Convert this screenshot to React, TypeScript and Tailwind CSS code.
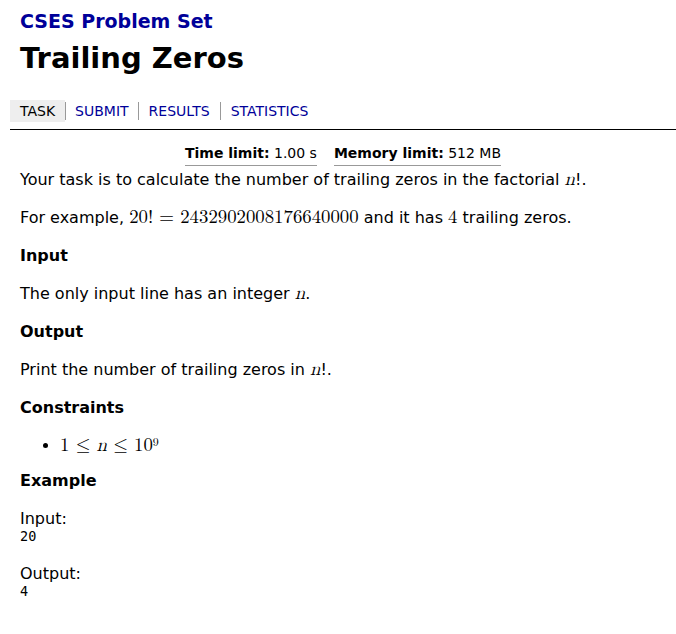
export default function App() {
  const m = "font-['Latin_Modern_Math','DejaVu_Serif',serif] text-[18.8px] leading-none";
  return (
    <div className="min-h-[634px] bg-white text-black font-['DejaVu_Sans',sans-serif] text-[16px]">
      <div className="pl-[10px]">
        <div className="px-[10px] pt-[9px]">
          <div className="text-[19px] font-bold text-[#000099] leading-[24px]">CSES Problem Set</div>
          <h1 className="text-[29px] font-bold leading-[36px] mt-[7px]">Trailing Zeros</h1>
        </div>
        <div className="mt-[24px] flex items-center text-[14px] leading-[22px]">
          <span className="bg-[#eeeeee] px-[10px] py-0 h-[22px]">TASK</span>
          <span className="w-px h-[18px] bg-[#999]" />
          <span className="px-[9px] text-[#000099]">SUBMIT</span>
          <span className="w-px h-[18px] bg-[#999]" />
          <span className="px-[10px] text-[#000099]">RESULTS</span>
          <span className="w-px h-[18px] bg-[#999]" />
          <span className="px-[10px] text-[#000099]">STATISTICS</span>
        </div>
        <div className="mt-[7px] border-t border-black" />
        <div className="px-[10px]">
          <div className="flex justify-center gap-[17px] text-[14px] mt-[13px] leading-[20px]">
            <span className="border-b border-[#999] pb-[2px]"><b>Time limit:</b> 1.00 s</span>
            <span className="border-b border-[#999] pb-[2px]"><b>Memory limit:</b> 512 MB</span>
          </div>
          <div className="leading-[22px] mt-[3px]">
            <p>Your task is to calculate the number of trailing zeros in the factorial <i className={m}>n</i>!.</p>
            <p className="mt-[16px]">For example, <span className={m}>20! = 2432902008176640000</span> and it has <span className={m}>4</span> trailing zeros.</p>
            <h2 className="font-bold mt-[16px]">Input</h2>
            <p className="mt-[16px]">The only input line has an integer <i className={m}>n</i>.</p>
            <h2 className="font-bold mt-[16px]">Output</h2>
            <p className="mt-[16px]">Print the number of trailing zeros in <i className={m}>n</i>!.</p>
            <h2 className="font-bold mt-[16px]">Constraints</h2>
            <ul className="mt-[16px] pl-[40px] list-disc">
              <li className="h-[19px]">
                <span className={m}>
                  1 ≤ <i>n</i> ≤ 10<sup className="text-[12px] leading-none relative -top-[5px]">9</sup>
                </span>
              </li>
            </ul>
            <h2 className="font-bold mt-[16px]">Example</h2>
            <p className="mt-[17px] leading-[19px]">Input:</p>
            <pre className="font-['DejaVu_Sans_Mono',monospace] text-[13.5px] leading-[17px]">20</pre>
            <p className="mt-[19px] leading-[19px]">Output:</p>
            <pre className="font-['DejaVu_Sans_Mono',monospace] text-[13.5px] leading-[17px]">4</pre>
          </div>
        </div>
      </div>
    </div>
  );
}
